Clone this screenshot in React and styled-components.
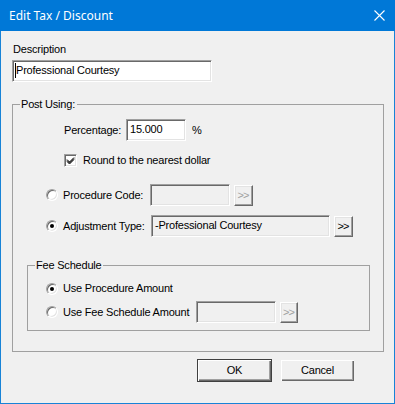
import React from 'react';
import styled, { createGlobalStyle } from 'styled-components';

const GlobalStyle = createGlobalStyle`
  html, body {
    margin: 0;
    padding: 0;
    background: #f0f0f0;
  }
  * {
    box-sizing: border-box;
  }
`;

// window chrome

const Window = styled.div`
  width: 395px;
  height: 404px;
  background: #f0f0f0;
  border: 1px solid #1883d7;
  border-top: none;
  display: flex;
  flex-direction: column;
  font-family: 'Liberation Sans', Arial, sans-serif;
  font-size: 11px;
  letter-spacing: -0.2px;
  color: #000;
`;

const TitleBar = styled.div`
  height: 31px;
  margin: 0 -1px;
  background: #0078d7;
  color: #fff;
  display: flex;
  align-items: center;
  justify-content: space-between;
  padding: 0 10px 1px 9px;
  font-family: 'Noto Sans', 'Open Sans', sans-serif;
  font-size: 12px;
  letter-spacing: 0;
`;

const CloseIcon = styled.svg`
  width: 11px;
  height: 11px;
`;

const Body = styled.div`
  flex: 1;
  display: flex;
  flex-direction: column;
  padding: 12px 10px 0 11px;
`;

// controls

const Label = styled.div`
  line-height: 13px;
  height: 13px;
  flex: none;
  width: ${(p) => (p.$w ? `${p.$w}px` : 'auto')};
  margin-left: ${(p) => p.$indent || 0}px;
  white-space: nowrap;
`;

const TextBox = styled.div`
  width: ${(p) => p.$w}px;
  height: 22px;
  flex: none;
  background: ${(p) => (p.$disabled ? '#f0f0f0' : '#fff')};
  border: 1px solid;
  border-color: #a0a0a0 #fff #fff #a0a0a0;
  box-shadow: inset 1px 1px 0 #696969, inset -1px -1px 0 #e3e3e3;
  padding: 3px 3px 0 3px;
  line-height: 13px;
  white-space: nowrap;
  overflow: hidden;
  display: flex;
  align-items: flex-start;
  margin-left: ${(p) => p.$ml || 0}px;
`;

const Caret = styled.span`
  display: inline-block;
  width: 1px;
  height: 15px;
  margin: -1px 0 0 -1px;
  background: #000;
`;

const SmallButton = styled.div`
  width: ${(p) => p.$w || 19}px;
  height: 21px;
  flex: none;
  margin-left: ${(p) => p.$ml || 4}px;
  background: #f0f0f0;
  border: 1px solid;
  border-color: #fff #696969 #696969 #fff;
  box-shadow: inset -1px -1px 0 #a0a0a0, inset 1px 1px 0 #e3e3e3;
  color: ${(p) => (p.$disabled ? '#a0a0a0' : '#000')};
  display: flex;
  align-items: center;
  justify-content: center;
  letter-spacing: -1px;
  font-size: 11px;
  padding: 0 1px 1px 0;
`;

const PushButton = styled.div`
  width: 75px;
  height: 23px;
  background: #f0f0f0;
  border: 1px solid ${(p) => (p.$default ? '#404040' : '#f0f0f0')};
  box-shadow: inset 1px 1px 0 #fff, inset -1px -1px 0 #696969, inset -2px -2px 0 #a0a0a0;
  display: flex;
  align-items: center;
  justify-content: center;
  padding-bottom: 1px;
`;

const CheckBox = styled.div`
  width: 13px;
  height: 13px;
  flex: none;
  background: #fff;
  border: 1px solid;
  border-color: #a0a0a0 #fff #fff #a0a0a0;
  box-shadow: inset 1px 1px 0 #696969, inset -1px -1px 0 #e3e3e3;
  display: flex;
  align-items: center;
  justify-content: center;
`;

const Radio = styled.div`
  width: 12px;
  height: 12px;
  flex: none;
  border-radius: 50%;
  background: #fff;
  border: 1px solid;
  border-color: #a0a0a0 #fff #fff #a0a0a0;
  box-shadow: inset 1px 1px 0 #696969, inset -1px -1px 0 #e3e3e3;
  display: flex;
  align-items: center;
  justify-content: center;
  &::after {
    content: '';
    display: ${(p) => (p.$on ? 'block' : 'none')};
    width: 4px;
    height: 4px;
    border-radius: 50%;
    background: #000;
  }
`;

// layout

const Row = styled.div`
  display: flex;
  align-items: center;
  height: ${(p) => p.$h || 22}px;
  margin-top: ${(p) => p.$mt || 0}px;
  padding-left: ${(p) => p.$pl || 0}px;
  gap: ${(p) => p.$gap || 0}px;
`;

const Group = styled.fieldset`
  margin: ${(p) => p.$mt || 0}px 0 0 ${(p) => p.$ml || 0}px;
  width: ${(p) => p.$w}px;
  height: ${(p) => p.$h}px;
  border: 1px solid #a0a0a0;
  padding: 0;
  min-width: 0;
`;

const Legend = styled.legend`
  margin-left: 7px;
  padding: 0 2px 0 1px;
  line-height: 13px;
  height: 13px;
`;

const Footer = styled.div`
  display: flex;
  justify-content: flex-end;
  gap: 8px;
  margin-top: 7px;
  padding-right: 29px;
`;

const Tick = () => (
  <svg width="9" height="9" viewBox="0 0 9 9">
    <path d="M1 3.5 L3.5 6 L8 1.5 M1 4.5 L3.5 7 L8 2.5 M1 5.5 L3.5 8 L8 3.5" stroke="#000" strokeWidth="1" fill="none" />
  </svg>
);

export default function App() {
  return (
    <>
      <GlobalStyle />
      <Window>
        <TitleBar>
          <span>Edit Tax / Discount</span>
          <CloseIcon viewBox="0 0 11 11">
            <path d="M0.5 0.5 L10.5 10.5 M10.5 0.5 L0.5 10.5" stroke="#fff" strokeWidth="1.1" />
          </CloseIcon>
        </TitleBar>
        <Body>
          <Label $indent={1}>Description</Label>
          <Row $mt={4}>
            <TextBox $w={200}>
              <Caret />
              Professional Courtesy
            </TextBox>
          </Row>

          <Group $mt={16} $w={372} $h={254}>
            <Legend>Post Using:</Legend>
            <Row $mt={8} $pl={51}>
              <Label $w={62}>Percentage:</Label>
              <TextBox $w={60}>15.000</TextBox>
              <Label $indent={6}>%</Label>
            </Row>
            <Row $mt={13} $h={13} $pl={51} $gap={6}>
              <CheckBox><Tick /></CheckBox>
              <Label>Round to the nearest dollar</Label>
            </Row>
            <Row $mt={17} $pl={33}>
              <Radio />
              <Label $indent={5} $w={87}>Procedure Code:</Label>
              <TextBox $w={80} $disabled />
              <SmallButton $disabled $ml={4}>&gt;&gt;</SmallButton>
            </Row>
            <Row $mt={9} $pl={33}>
              <Radio $on />
              <Label $indent={5} $w={88}>Adjustment Type:</Label>
              <TextBox $w={179} $disabled>-Professional Courtesy</TextBox>
              <SmallButton $ml={4}>&gt;&gt;</SmallButton>
            </Row>
            <Group $mt={22} $ml={14} $w={343} $h={72}>
              <Legend>Fee Schedule</Legend>
              <Row $mt={10} $h={13} $pl={18}>
                <Radio $on />
                <Label $indent={5}>Use Procedure Amount</Label>
              </Row>
              <Row $mt={6} $pl={18}>
                <Radio />
                <Label $indent={5} $w={133}>Use Fee Schedule Amount</Label>
                <TextBox $w={80} $disabled />
                <SmallButton $disabled $ml={4} $w={18}>&gt;&gt;</SmallButton>
              </Row>
            </Group>
          </Group>

          <Footer>
            <PushButton $default>OK</PushButton>
            <PushButton>Cancel</PushButton>
          </Footer>
        </Body>
      </Window>
    </>
  );
}
